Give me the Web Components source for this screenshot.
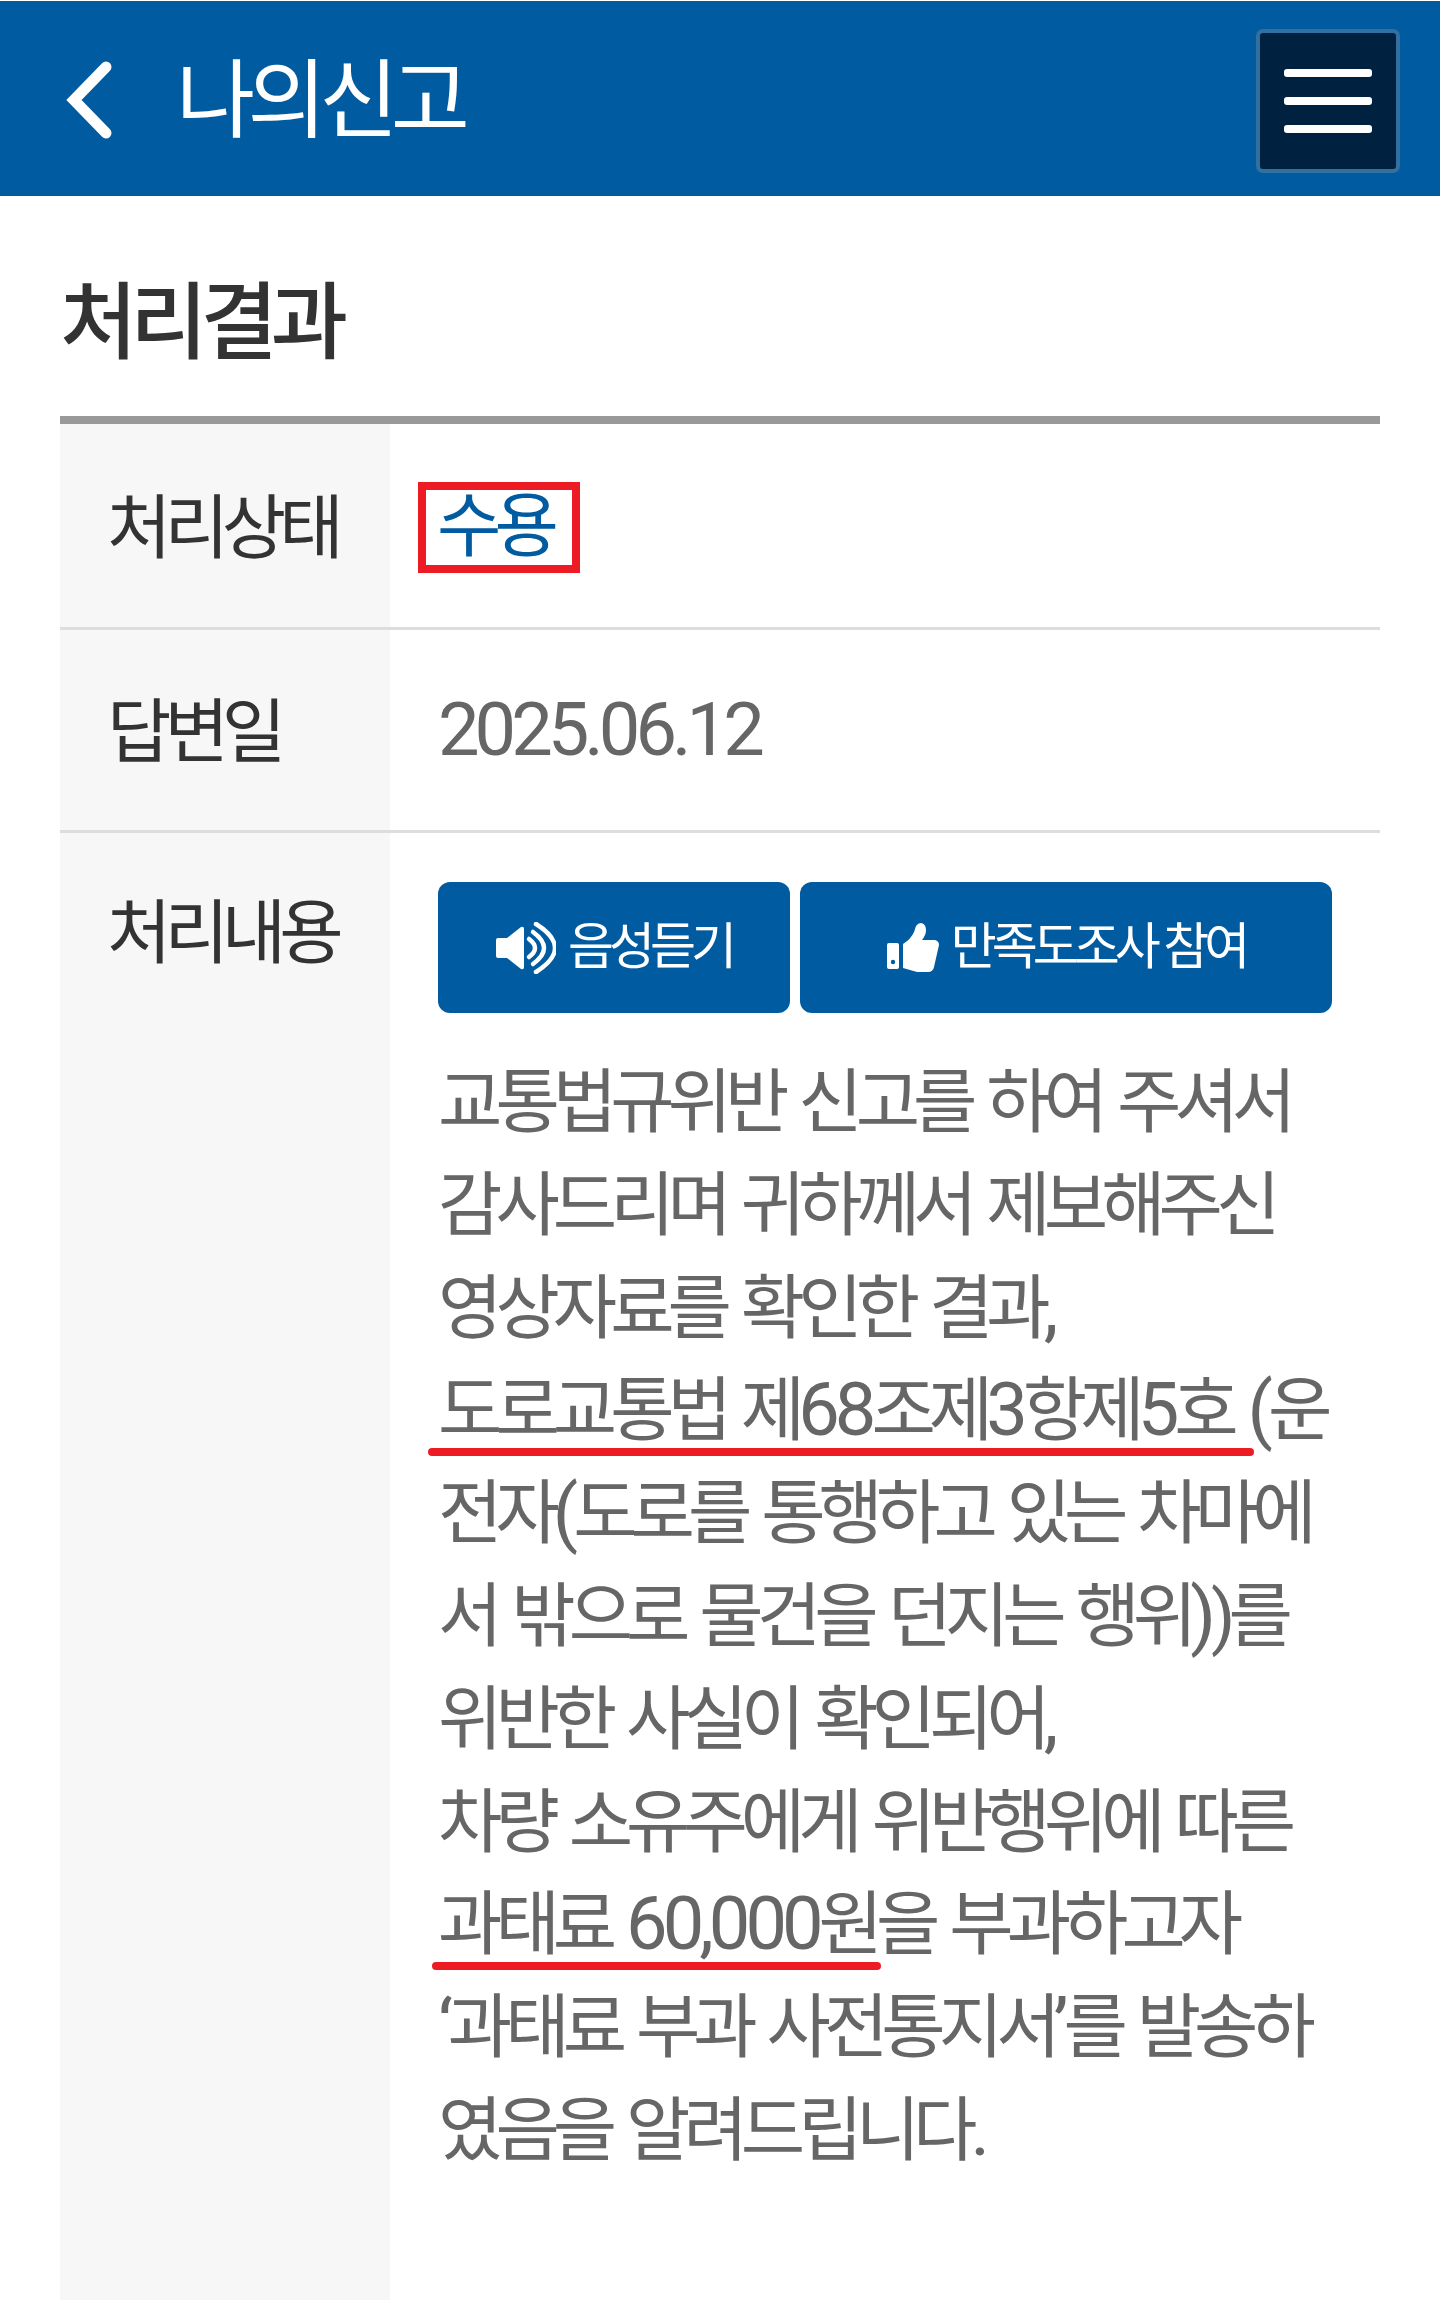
<!DOCTYPE html>
<html lang="ko">
<head>
<meta charset="utf-8">
<title>나의신고</title>
<style>
html,body{margin:0;padding:0;background:#fff}
body{font-family:Roboto,"Noto Sans CJK KR",sans-serif;height:2300px;overflow:hidden;display:flex;flex-direction:column}
</style>
</head>
<body>
<app-header>나의신고</app-header>
<section-title>처리결과</section-title>
<result-table>
  <result-row label="처리상태" h="206"><status-mark>수용</status-mark></result-row>
  <result-row label="답변일" h="203"><num-run>2025.06.12</num-run></result-row>
  <result-row label="처리내용" grow top>
    <action-bar>
      <action-button icon="sound" w="352">음성듣기</action-button>
      <action-button icon="thumb" w="532">만족도조사 참여</action-button>
    </action-bar>
    <answer-text>
      교통법규위반 신고를 하여 주셔서<br>
      감사드리며 귀하께서 제보해주신<br>
      영상자료를 확인한 결과<num-run>,</num-run><br>
      <red-line l="-10" r="-6">도로교통법 제<num-run>68</num-run>조제<num-run>3</num-run>항제<num-run>5</num-run>호 </red-line><num-run>(</num-run>운<br>
      전자<num-run>(</num-run>도로를 통행하고 있는 차마에<br>
      서 밖으로 물건을 던지는 행위<num-run>)</num-run>)를<br>
      위반한 사실이 확인되어<num-run>,</num-run><br>
      차량 소유주에게 위반행위에 따른<br>
      <red-line l="-6" r="-5">과태료 <num-run>60,000</num-run>원</red-line>을 부과하고자<br>
      <num-run>‘</num-run>과태료 부과 사전통지서<num-run>’</num-run>를 발송하<br>
      였음을 알려드립니다<num-run>.</num-run>
    </answer-text>
  </result-row>
</result-table>
<script>
function def(name, html, init){
  customElements.define(name, class extends HTMLElement{
    constructor(){super();this.attachShadow({mode:'open'}).innerHTML=html;}
    connectedCallback(){ if(init) init(this); }
  });
}
def('app-header',`<style>
:host{display:flex;align-items:center;height:195px;margin-top:1px;background:#005ba1;color:#fff;box-sizing:border-box;padding:0 40px 0 66px;flex:none}
svg.b{width:48px;height:80px;margin-right:62px;flex:none;margin-top:3px}
.t{flex:1;font-size:86px;letter-spacing:-7.500px;line-height:1;margin-top:6px;white-space:nowrap;font-weight:400}
.m{width:144px;height:144px;box-sizing:border-box;background:#002240;border:4px solid #336f9f;border-radius:7px;display:flex;flex-direction:column;gap:20px;align-items:center;padding-top:36px;margin-top:4px}
.m i{display:block;width:88px;height:8px;background:#fff;border-radius:3px}
</style>
<svg class="b" viewBox="0 0 48 80"><path d="M40 7 L8 40 L40 73" fill="none" stroke="#fff" stroke-width="11" stroke-linecap="round" stroke-linejoin="miter"/></svg>
<div class="t"><slot></slot></div>
<div class="m"><i></i><i></i><i></i></div>`);
def('section-title',`<style>
:host{display:block;flex:none;height:220px;box-sizing:border-box;padding:78px 0 0 60px;font-size:84px;line-height:100px;font-weight:500;letter-spacing:-7px;color:#333}
</style><slot></slot>`);
def('result-table',`<style>
:host{display:flex;flex-direction:column;flex:1;margin:0 60px;border-top:8px solid #999;min-height:0}
</style><slot></slot>`);
def('result-row',`<style>
:host{display:flex;flex:none;box-sizing:border-box;border-bottom:3px solid #ddd}
:host([grow]){flex:1;border-bottom:0}
.l{width:330px;flex:none;background:#f7f7f7;box-sizing:border-box;padding:0 0 7px 47px;display:flex;align-items:center;font-size:70px;letter-spacing:-7px;color:#333;white-space:nowrap}
:host([top]) .l{align-items:flex-start;padding:51px 0 0 47px;line-height:100px}
.v{flex:1;box-sizing:border-box;padding:0 48px 2px;display:flex;align-items:center;font-size:70px;letter-spacing:-7px;word-spacing:5.500px;color:#666;white-space:nowrap}
:host([top]) .v{display:block;padding:49px 48px 0}
</style><div class="l"></div><div class="v"><slot></slot></div>`, el=>{
  el.shadowRoot.querySelector('.l').textContent=el.getAttribute('label');
  if(el.hasAttribute('h')) el.style.height=el.getAttribute('h')+'px';
});
def('num-run',`<style>
:host{display:inline;font-size:74px;letter-spacing:-5px;line-height:var(--run-lh,normal)}
</style><slot></slot>`);
def('status-mark',`<style>
:host{display:inline-block;box-sizing:border-box;border:8px solid #ed1c24;padding:0 0 0 11px;margin-left:-20px;color:#005ba1;width:162px;height:91px;line-height:74px;margin-top:5px}
</style><slot></slot>`);
def('action-bar',`<style>:host{display:flex;gap:10px}</style><slot></slot>`);
def('action-button',`<style>
:host{display:flex;align-items:center;justify-content:center;gap:12px;height:131px;background:#005ba1;border-radius:12px;color:#fff;font-size:50px;letter-spacing:-5px;word-spacing:0;box-sizing:border-box;flex:none}
#i{display:flex}
#s{margin-top:-12px}
</style><span id="i"></span><span id="s"><slot></slot></span>`, el=>{
  el.style.width=el.getAttribute('w')+'px';
  const s={
    sound:`<svg width="60" height="52" viewBox="0 0 60 52" fill="#fff"><path d="M2 16H11L25 5Q28 4 28 7V45Q28 48 25 47L11 36H2Q0 36 0 34V18Q0 16 2 16Z"/><g fill="none" stroke="#fff" stroke-width="4.500" stroke-linecap="round"><path d="M33 17Q45 26 33 35"/><path d="M37 10Q59 26 37 42"/><path d="M40 2Q78 26 40 50"/></g></svg>`,
    thumb:`<svg width="52" height="49" viewBox="0 0 52 49" fill="#fff"><rect x="0" y="20" width="12" height="26" rx="2"/><circle cx="6" cy="39" r="2.200" fill="#005ba1"/><path d="M16 21Q24 16 27 9L29 3Q31 0 34 0Q39 1 39 7Q39 12 35 17H48Q52 18 52 22L47 44Q46 49 41 49H30L16 45Z"/></svg>`
  };
  el.shadowRoot.getElementById('i').innerHTML=s[el.getAttribute('icon')];
});
def('answer-text',`<style>
:host{display:block;--run-lh:0;margin-top:39px;font-size:70px;line-height:102.800px;letter-spacing:-7px;word-spacing:5.500px;color:#666;white-space:nowrap}
</style><slot></slot>`);
def('red-line',`<style>
:host{display:inline;position:relative;white-space:pre}
i{position:absolute;height:8px;border-radius:4px;background:#ed1c24;bottom:-4px}
</style><slot></slot><i></i>`, el=>{
  const i=el.shadowRoot.querySelector('i');
  i.style.left=el.getAttribute('l')+'px';
  i.style.right=el.getAttribute('r')+'px';
});
</script>
</body>
</html>
